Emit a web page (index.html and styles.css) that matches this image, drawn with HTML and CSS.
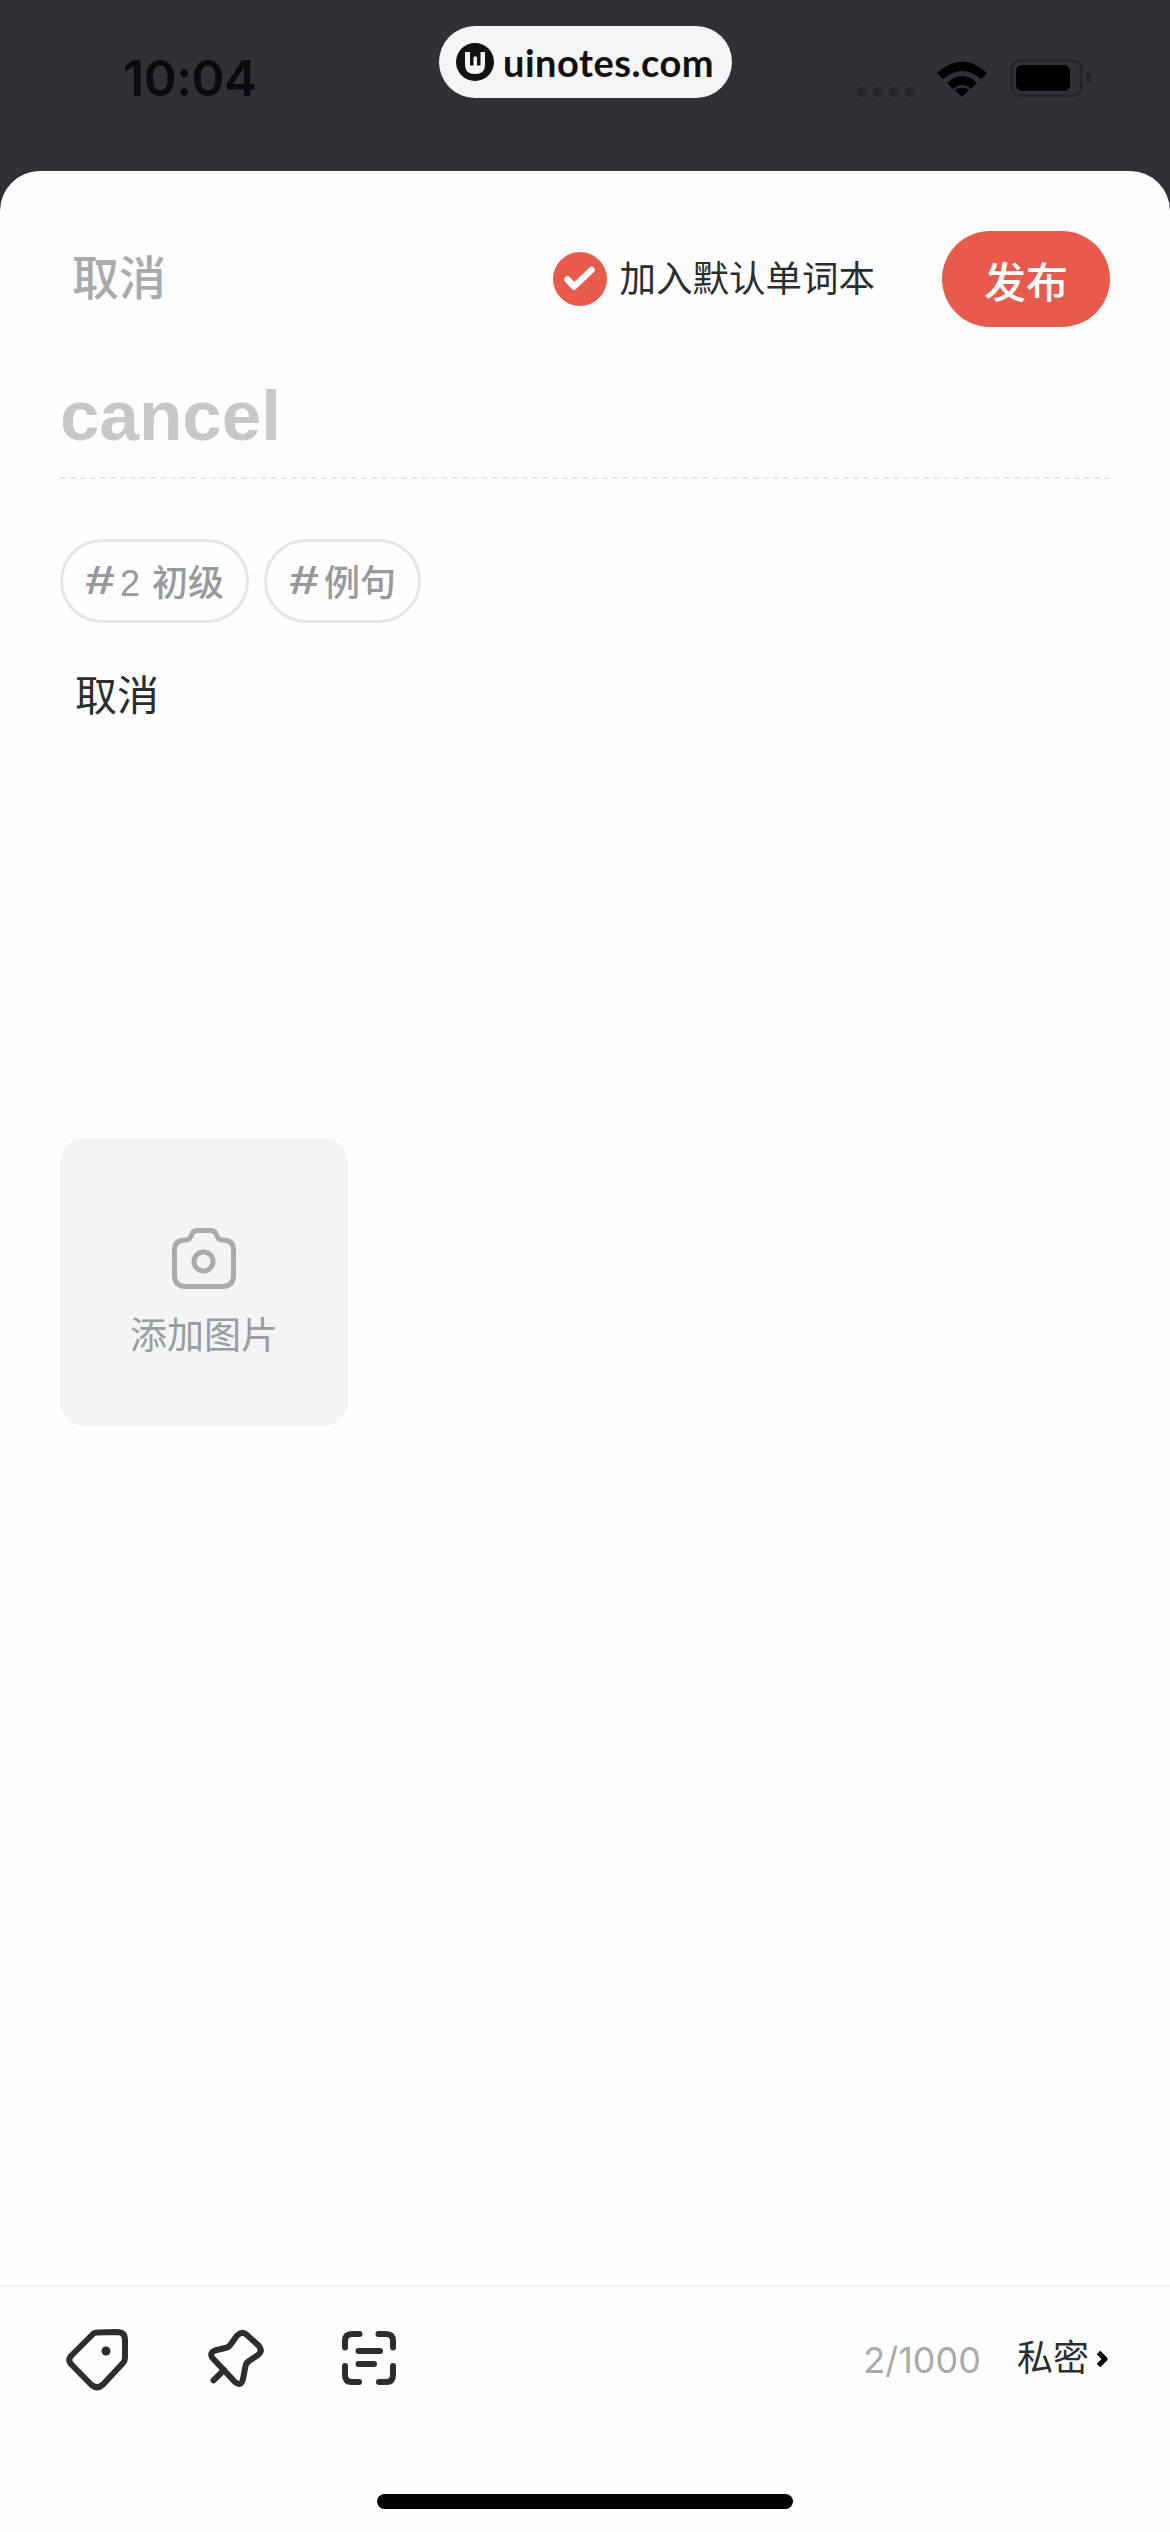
FILE: index.html

```html
<!DOCTYPE html>
<html lang="en">
<head>
    <meta charset="UTF-8">
    <meta name="viewport" content="width=device-width, initial-scale=1.0">
    <title>发布</title>
    <link rel="stylesheet" href="styles.css">
</head>
<body>
  <div class="status-bar">
    <span class="time">10:04</span>
    <div class="status-icons">
      <div class="signal"><i></i><i></i><i></i><i></i></div>
      <svg class="wifi" width="50" height="38" viewBox="0 0 50 38">
        <path d="M0 14 Q25 -9 50 14 L44 20 Q25 4 6 20 Z" fill="#000"/>
        <path d="M10 24 Q25 10 40 24 L34 30 Q25 22 16 30 Z" fill="#000"/>
        <path d="M18 31 Q25 26 32 31 L25 38 Z" fill="#000"/>
      </svg>
      <div class="battery"><div class="battery-level"></div></div>
      <div class="battery-nub"></div>
    </div>
  </div>

  <!-- watermark over the status bar -->
  <div class="watermark">
    <svg width="38" height="38" viewBox="0 0 38 38">
      <circle cx="19" cy="19" r="19" fill="#111"/>
      <path d="M9 9 H14 V22.5 H17.5 V14.5 L19 13 L21 14.5 V22.5 H24.5 V9 H29 V22 Q29 31 19 31 Q9 31 9 22 Z" fill="#f5f5f5"/>
    </svg>
    <span>uinotes.com</span>
  </div>

  <div class="sheet">
    <div class="top-row">
      <span class="cancel">取消</span>
      <div class="default-book">
        <svg width="54" height="54" viewBox="0 0 54 54">
          <circle cx="27" cy="27" r="27" fill="#e85b4c"/>
          <path d="M14.5 27.5 L21 34.5 L38.5 18" fill="none" stroke="#fff" stroke-width="6.5" stroke-linecap="round" stroke-linejoin="round"/>
        </svg>
        <span>加入默认单词本</span>
      </div>
      <button class="publish">发布</button>
    </div>

    <div class="word">cancel</div>

    <div class="tags">
      <span class="tag"><b>#</b>2 初级</span>
      <span class="tag"><b>#</b>例句</span>
    </div>

    <div class="note">取消</div>

    <div class="add-image">
      <svg width="64" height="61" viewBox="0 0 64 61">
        <path d="M2.5 22 Q2.5 12 13 12 H14 Q17 12 18.5 9 L20 6 Q21.5 2.5 25 2.5 H39 Q42.5 2.5 44 6 L45.5 9 Q47 12 50 12 H51 Q61.5 12 61.5 22 V47 Q61.5 58.5 50 58.5 H14 Q2.5 58.5 2.5 47 Z" fill="none" stroke="#a8aaac" stroke-width="5"/>
        <circle cx="31.5" cy="33.5" r="9.5" fill="none" stroke="#a8aaac" stroke-width="5"/>
      </svg>
      <span>添加图片</span>
    </div>

    <div class="toolbar">
      <div class="tools">
        <svg width="66" height="66" viewBox="0 0 66 66">
          <path d="M33 4.5 L53 4 Q61 4 61 12 L61 30 Q61 33 59 35 L39 56.5 Q33 62 27 56.5 L8 37 Q2.5 32 8 27 L28 7 Q30 4.5 33 4.5 Z" fill="none" stroke="#2c2d30" stroke-width="6" stroke-linejoin="round"/>
          <circle cx="42" cy="23" r="4.5" fill="#2c2d30"/>
        </svg>
        <svg width="66" height="66" viewBox="0 0 66 66">
          <path d="M23 19.5 Q25 19 27 16 L33 7.5 Q38 2.5 43 7 L55 18 Q59 23 54 27 L45 33 Q42 35 41.5 38 L39 51 Q37 59 31 54 L8.5 30 Q5 25 11 22.5 Z" fill="none" stroke="#2c2d30" stroke-width="6" stroke-linejoin="round"/>
          <path d="M20 42 L9.5 52.3" fill="none" stroke="#2c2d30" stroke-width="6" stroke-linecap="round"/>
        </svg>
        <svg class="scan" width="60" height="60" viewBox="0 0 60 60">
          <path d="M6 19.5 V13 Q6 6 13 6 H20.5 M39.5 6 H47 Q54 6 54 13 V19.5 M6 38 V47 Q6 54 13 54 H20 M54 38 V47 Q54 54 47 54 H40 M19.5 23 H41 M19.5 36 H35" fill="none" stroke="#2c2d30" stroke-width="6" stroke-linecap="round"/>
        </svg>
      </div>
      <span class="count">2/1000</span>
      <span class="privacy">私密</span>
      <svg class="chevron" width="12" height="18" viewBox="0 0 12 18">
        <path d="M2.5 2.5 L9 9 L2.5 15.5" fill="none" stroke="#000" stroke-width="5" stroke-linejoin="round"/>
      </svg>
    </div>

    <div class="home-bar"></div>
  </div>
</body>
</html>
```

FILE: styles.css

```css
* {
    box-sizing: border-box;
}

body {
    margin: 0;
    width: 1170px;
    height: 2532px;
    overflow: hidden;
    background-color: #303136;
    font-family: "Liberation Sans", "Noto Sans CJK SC", sans-serif;
    position: relative;
}

.status-bar {
    height: 171px;
    padding: 59px 79px 0 123px;
    display: flex;
    justify-content: space-between;
    align-items: flex-start;
}

.time {
    font-family: Inter, sans-serif;
    font-size: 50px;
    font-weight: 600;
    line-height: 38px;
    letter-spacing: -0.5px;
    color: #0b0b0b;
}

.status-icons {
    display: flex;
    align-items: flex-start;
}

.signal {
    display: flex;
    gap: 7px;
    margin: 28px 23px 0 0;
}

.signal i {
    width: 9px;
    height: 10px;
    border-radius: 4px;
    background-color: #25262a;
}

.battery {
    width: 73px;
    height: 38px;
    margin-left: 23px;
    padding: 3px;
    border: 3px solid #25262a;
    border-radius: 11px;
}

.battery-level {
    width: 54px;
    height: 26px;
    background-color: #000;
    border-radius: 6px;
}

.battery-nub {
    width: 5px;
    height: 12px;
    margin: 13px 0 0 3px;
    background-color: #25262a;
    border-radius: 0 6px 6px 0;
}

.watermark {
    position: absolute;
    left: 439px;
    top: 26px;
    width: 293px;
    height: 72px;
    padding-left: 17px;
    display: flex;
    align-items: center;
    gap: 9px;
    background-color: #f5f5f5;
    border-radius: 36px;
}

.watermark span {
    font-family: Lato, sans-serif;
    font-size: 38px;
    font-weight: 700;
    letter-spacing: 0.5px;
    color: #111;
}

.sheet {
    height: 2361px;
    padding: 60px 60px 0;
    background-color: #fefefe;
    border-radius: 40px 40px 0 0;
    display: flex;
    flex-direction: column;
}

.top-row {
    display: flex;
    align-items: center;
    height: 96px;
}

.cancel {
    margin: 0 0 9px 12px;
    font-size: 47px;
    font-weight: 500;
    color: #a8aaac;
}

.default-book {
    margin-left: auto;
    display: flex;
    align-items: center;
    gap: 13px;
    font-size: 36.5px;
    color: #2c2d30;
}

.default-book span {
    margin-bottom: 6px;
}

.publish {
    width: 168px;
    height: 96px;
    margin-left: 67px;
    padding: 0;
    border: none;
    border-radius: 48px;
    background-color: #e85b4c;
    color: #fff;
    font-family: inherit;
    font-size: 42px;
    font-weight: 500;
}

.word {
    height: 152px;
    padding-top: 47px;
    border-bottom: 2px dashed #e8e8e8;
    font-size: 71px;
    font-weight: 700;
    line-height: 84px;
    color: #c6c8ca;
}

.tags {
    display: flex;
    gap: 15px;
    margin-top: 60px;
}

.tag {
    height: 84px;
    padding: 0 22px 2px 22px;
    display: flex;
    align-items: center;
    border: 3px solid #e6e6e6;
    border-radius: 42px;
    font-size: 36px;
    font-weight: 500;
    word-spacing: 2px;
    color: #98999c;
    white-space: pre;
}

/* the # in the reference is wider than the font's */
.tag b {
    display: inline-block;
    width: 30px;
    margin-right: 5px;
    font-size: 41px;
    text-align: center;
    transform: scaleX(1.3);
}

.note {
    margin: 50px 0 0 15px;
    font-size: 42px;
    line-height: 48px;
    color: #2c2d30;
}

.add-image {
    width: 288px;
    height: 288px;
    margin-top: 417px;
    padding-top: 90px;
    display: flex;
    flex-direction: column;
    align-items: center;
    gap: 27px;
    background-color: #f2f4f6;
    border-radius: 24px;
    font-size: 37px;
    line-height: 42px;
    color: #9a9c9f;
}

.toolbar {
    margin: 859px -60px 0;
    height: 133px;
    padding: 41px 62px 0 64px;
    display: flex;
    align-items: flex-start;
    border-top: 2px solid #f0f0f0;
}

.tools {
    display: flex;
    gap: 74px;
    margin-right: auto;
}

.tools .scan {
    margin-left: -5px;
}

.count {
    font-family: Inter, sans-serif;
    font-size: 36px;
    line-height: 64px;
    color: #a8aaac;
}

.privacy {
    margin-left: 36px;
    font-size: 36px;
    line-height: 62px;
    color: #2c2d30;
}

.chevron {
    margin: 22px 0 0 7px;
}

.home-bar {
    width: 416px;
    height: 15px;
    margin: 76px auto 0;
    background-color: #000;
    border-radius: 8px;
}
```
